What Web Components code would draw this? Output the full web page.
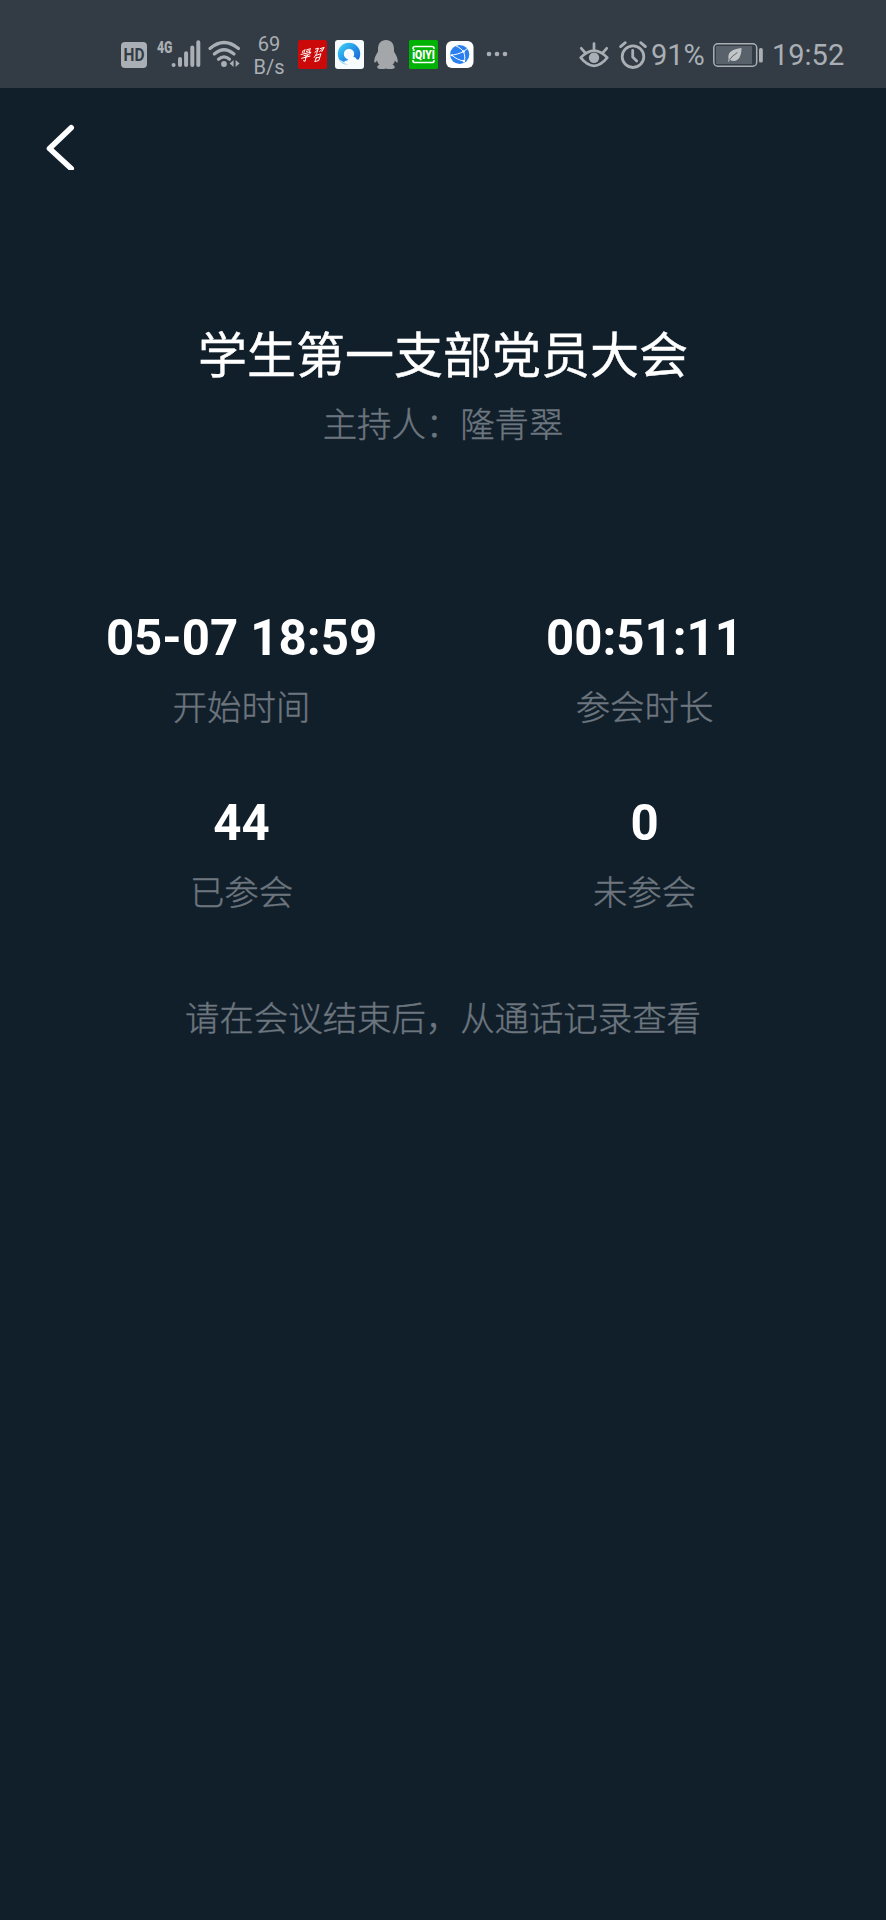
<!DOCTYPE html>
<html lang="zh-CN">
<head>
<meta charset="utf-8">
<title>会议详情</title>
<style>
body{margin:0;background:#111f2b}
</style>
</head>
<body>
<meeting-page></meeting-page>
<script>
function define(name, css, html) {
  const tpl = document.createElement('template');
  tpl.innerHTML = '<style>' + css + '</style>' + html;
  customElements.define(name, class extends HTMLElement {
    constructor() {
      super();
      this.attachShadow({mode: 'open'}).append(tpl.content.cloneNode(true));
    }
  });
}
const box = (w, h) => `:host{display:block;flex:none;width:${w}px;height:${h}px}svg{display:block;overflow:visible}`;
const svg = (w, h, body) => `<svg width="${w}" height="${h}" viewBox="0 0 ${w} ${h}" fill="none">${body}</svg>`;
const icon = (name, w, h, body) => define(name, box(w, h), svg(w, h, body));
const GREY = '#a9afb4';
const MUTED = '#6d767e';
const LABEL = `font:300 34.4px/40px "Noto Sans CJK SC",sans-serif;color:${MUTED};-webkit-text-stroke:.4px ${MUTED}`;

icon('hd-icon', 26, 26, `<rect width="26" height="26" rx="4" fill="${GREY}"/>
<text x="13" y="19.2" text-anchor="middle" textLength="21" lengthAdjust="spacingAndGlyphs" font-family="Roboto,sans-serif" font-weight="700" font-size="17.5" fill="#333c44">HD</text>`);

icon('signal-icon', 44, 28, `<text x="0" y="13" textLength="15.5" lengthAdjust="spacingAndGlyphs" font-family="Roboto,sans-serif" font-weight="900" font-size="17" fill="${GREY}">4G</text>
<g stroke="${GREY}" stroke-width="4" stroke-linecap="round"><path d="M16.6 25v.1M23 18.9v6.2M29.1 13.3v11.8M35.3 7.5v17.6M41.3 2.3v22.8"/></g>`);

icon('wifi-icon', 33, 28, `<g stroke="${GREY}" stroke-width="3.2" stroke-linecap="round"><path d="M2 8.5Q16 -3.5 30.5 8.5"/><path d="M6.3 14Q16 5.5 26 14"/><path d="M10.5 19.2Q16 14.6 21.5 19.2"/></g>
<circle cx="16" cy="24" r="2.9" fill="${GREY}"/><path d="M25.6 20v7l-4-3.5zM27.6 20v7l4-3.5z" fill="${GREY}"/>`);

icon('study-icon', 29, 29, `<rect width="29" height="29" rx="2.5" fill="#cb0908"/>
<g stroke="#fff" stroke-width="1" stroke-linecap="round" stroke-linejoin="round">
<path d="M5.200 10.500l-.8 2M7 9.500l-1 3M8.500 10l2.800-1M8.500 11.500l2-.6M12.300 8.500l-.8 3M3 14.500l10-2.400-1.600 2.200M6 15.600l4.600-1-3.200 2.500M3.600 18.300l8.400-2.200M8 16.800l-.9 4.500-1.600-.6"/>
<path d="M17.500 9l3-.9-1.600 4.500M16.800 12.500l2.700-2.500M22.200 8.600l4-1.200-2.400 4.200M21.600 11.500l2.800-2.300M18.800 13.400l-2.600 4M18.300 15.300l4.700-1.600-2.200 6.800-4 1.100 1.600-4.300M18.200 18l2.900-.8"/></g>`);

icon('browser-icon', 29, 29, `<defs><linearGradient id="r" x1="0" y1="0" x2="1" y2="1"><stop offset="0" stop-color="#38c7ef"/><stop offset=".5" stop-color="#2492e8"/><stop offset="1" stop-color="#176bd8"/></linearGradient></defs>
<rect width="29" height="29" rx="3" fill="#f8fbfd"/><circle cx="14" cy="14" r="8.2" stroke="url(#r)" stroke-width="6"/>
<path d="M10 25.6c-2.2 0-3.7-1.3-3.7-3s1.5-2.8 3.5-2.7c1-2.6 3-3.9 5.3-3.7 2.1.1 3.5 1.1 4.4 3 2.900-.4 5 .8 5 3.200 0 1.900-1.600 3.200-4 3.200z" fill="#f8fbfd" transform="translate(2.5 .5)"/><path d="M4.400 19.500A11 11 0 0 0 13 25.200L9 22z" fill="#b6e5f7"/>`);

icon('penguin-icon', 24, 29, `<path d="M12 0C6.800 0 4 3.800 4 8.700v2.700C2 14.500 0 18.500.2 21.400c.1 2 1.300 1.300 2.800-1 .5 1.800 1.300 3.200 2.500 4.300C3.800 25.300 3 26.300 3.200 27.400 3.600 29.300 9.700 29.300 12 28.400c2.300.9 8.400.9 8.800-1 .2-1.100-.6-2.100-2.300-2.700 1.200-1.100 2-2.500 2.500-4.300 1.500 2.300 2.700 3 2.800 1 .2-2.900-1.800-6.900-3.800-10V8.700C20 3.800 17.200 0 12 0z" fill="#a3a7aa"/>`);

icon('iqiyi-icon', 29, 29, `<rect width="29" height="29" rx="1.5" fill="#00b204"/>
<path d="M4 9V8.300Q4 6.500 6 6.500H23Q25 6.500 25 8.300V9M4 20v.7Q4 22.500 6 22.500H23Q25 22.500 25 20.700V20" stroke="#fff" stroke-width="1.600"/>
<text x="14.500" y="18.900" text-anchor="middle" textLength="22.500" lengthAdjust="spacingAndGlyphs" font-family="Roboto,sans-serif" font-weight="900" font-size="12.500" fill="#fff">iQIYI</text>`);

icon('globe-icon', 28, 27, `<rect width="27.500" height="27" rx="6" fill="#fff"/><circle cx="13.700" cy="13.500" r="9.600" fill="#2980ee"/>
<g stroke="#fff" stroke-width="1"><path d="M9.500 4.700C14 6.500 17 9.500 17.800 11.500S19.500 18 18 21.500M4.200 14.200C9 14 14 12.500 17.800 10.300L21.500 7.500M6 14.300C9 17 13.500 19.500 18 20"/></g>
<g fill="#fff"><circle cx="17.500" cy="10.500" r="1.300"/><circle cx="6" cy="14.300" r="1"/><circle cx="17.900" cy="20" r="1.300"/></g>`);

icon('more-icon', 22, 6, `<g fill="${GREY}"><circle cx="3" cy="3" r="2.300"/><circle cx="11" cy="3" r="2.300"/><circle cx="19" cy="3" r="2.300"/></g>`);

icon('eye-icon', 30, 26, `<g stroke="${GREY}" stroke-width="2.700" stroke-linecap="round"><path d="M1.700 15.700Q15 1.500 28.300 15.700Q15 32 1.700 15.700z" stroke-linejoin="round"/><path d="M15 1.500v6M2.300 6.300l4 4.500M27.700 6.300l-4 4.500"/></g><circle cx="15" cy="15.700" r="5.200" fill="${GREY}"/>`);

icon('alarm-icon', 28, 28, `<g stroke="${GREY}" stroke-width="2.800" stroke-linecap="round"><circle cx="14" cy="15.700" r="10.800"/><path d="M1.600 5.600L6.300 1.700M26.400 5.600L21.700 1.700"/><path d="M13.700 9.500v6.500l4 4" stroke-linejoin="round"/></g>`);

icon('battery-icon', 50, 24, `<rect x=".8" y=".8" width="42.900" height="22.400" rx="4" stroke="${GREY}" stroke-width="1.500"/><rect x="3" y="3" width="36" height="18" fill="#59626a"/><rect x="46" y="5" width="3.800" height="14.500" rx="1.600" fill="${GREY}"/>
<path d="M28.500 5C20 6.200 14.200 8.500 15.600 16.200L14.800 18.300l1 .4 1.200-1.800C24 20.200 28.500 15 28.500 5z" fill="#c3c6c8"/><path d="M16 17.500Q19 12.500 24.500 9.500" stroke="#606970" stroke-width="1"/>`);

define('net-speed', `:host{display:block;flex:none;width:32px;text-align:center;font:20px/22px Roboto,sans-serif;color:${GREY}}div{height:23px;white-space:nowrap}`, `<div>69</div><div>B/s</div>`);

define('phone-status-bar', `:host{display:flex;align-items:flex-start;height:88px;box-sizing:border-box;padding:40px 0 0 121px;background:#333c44;font:29px/34px Roboto,sans-serif;color:${GREY}}
span{flex:none;white-space:nowrap;margin-top:-2px}
hd-icon{margin-top:2px}signal-icon{margin-left:10px}wifi-icon{margin-left:7px}
net-speed{margin:-7px 0 0 12px}study-icon{margin-left:13px}browser-icon{margin-left:8px}
penguin-icon{margin-left:10px}iqiyi-icon{margin-left:11px}globe-icon{margin:1px 0 0 8px}
more-icon{margin:11px 0 0 12px}eye-icon{margin:2px 0 0 71px}alarm-icon{margin:1px 0 0 10px}
.pct{margin-left:4px;width:54px}battery-icon{margin:3px 0 0 8px}.time{margin-left:9px}`,
`<hd-icon></hd-icon><signal-icon></signal-icon><wifi-icon></wifi-icon><net-speed></net-speed><study-icon></study-icon><browser-icon></browser-icon><penguin-icon></penguin-icon><iqiyi-icon></iqiyi-icon><globe-icon></globe-icon><more-icon></more-icon><eye-icon></eye-icon><alarm-icon></alarm-icon><span class="pct">91%</span><battery-icon></battery-icon><span class="time">19:52</span>`);

define('back-button', `:host{display:block;height:46px;padding:36px 0 0 46px}svg{display:block}`,
svg(30, 46, `<path d="M25.200 3.800L3.500 24.500L25.200 44.500" stroke="#fff" stroke-width="5.600" stroke-linecap="round" stroke-linejoin="round"/>`));

define('meeting-heading', `:host{display:block;text-align:center}
h1{margin:0;font:400 49px/58px "Noto Sans CJK SC",sans-serif;color:#fff;-webkit-text-stroke:.4px #fff}p{margin:21px 0 0;${LABEL}}`,
`<h1><slot></slot></h1><p><slot name="host"></slot></p>`);

define('stat-item', `:host{display:block;text-align:center}
.v{font:700 49.200px/58px Roboto,sans-serif;color:#fff}.l{margin-top:18px;${LABEL}}`,
`<div class="v"><slot></slot></div><div class="l"><slot name="label"></slot></div>`);

define('stat-grid', `:host{display:grid;grid-template-columns:1fr 1fr;row-gap:69px;padding:0 40px}`, `<slot></slot>`);

define('page-hint', `:host{display:block;text-align:center;${LABEL}}`, `<slot></slot>`);

define('meeting-page', `:host{display:flex;flex-direction:column;height:1920px;background:#111f2b;overflow:hidden}
meeting-heading{margin-top:153px}stat-grid{margin-top:167px}page-hint{margin-top:86px}`,
`<phone-status-bar></phone-status-bar><back-button></back-button>
<meeting-heading>学生第一支部党员大会<span slot="host">主持人：隆青翠</span></meeting-heading>
<stat-grid>
<stat-item>05-07 18:59<span slot="label">开始时间</span></stat-item>
<stat-item>00:51:11<span slot="label">参会时长</span></stat-item>
<stat-item>44<span slot="label">已参会</span></stat-item>
<stat-item>0<span slot="label">未参会</span></stat-item>
</stat-grid>
<page-hint>请在会议结束后，从通话记录查看</page-hint>`);
</script>
</body>
</html>
